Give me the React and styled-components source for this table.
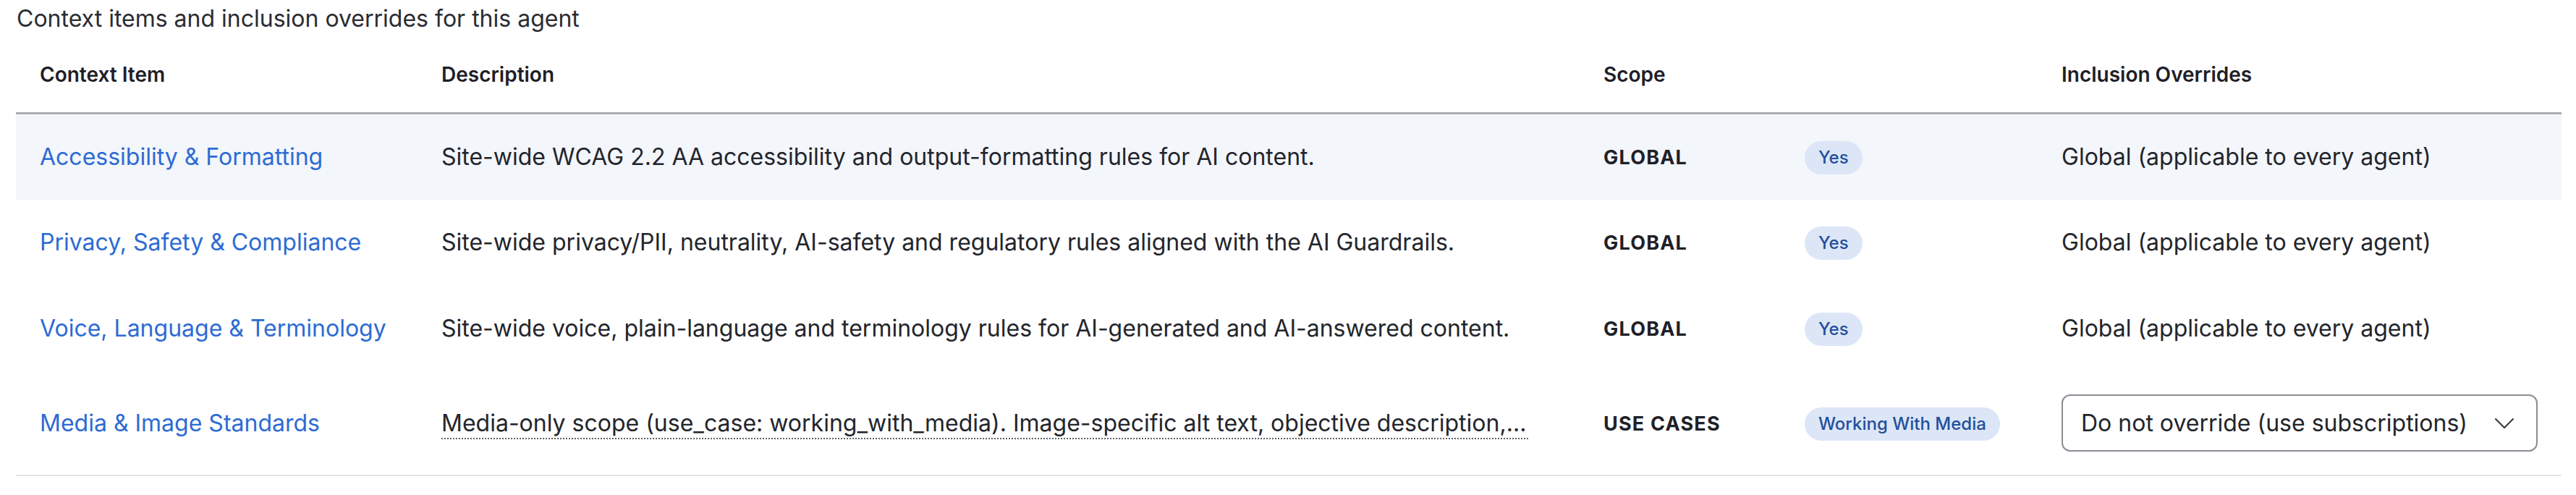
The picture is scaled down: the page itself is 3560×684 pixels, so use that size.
import React from 'react';
import styled, { createGlobalStyle } from 'styled-components';

const GlobalStyle = createGlobalStyle`
  html, body {
    margin: 0;
    padding: 0;
    background: #ffffff;
  }
  body {
    font-family: Inter, "Noto Sans", "Liberation Sans", sans-serif;
    color: #23252b;
  }
`;

const rows = [
  {
    name: 'Accessibility & Formatting',
    description:
      'Site-wide WCAG 2.2 AA accessibility and output-formatting rules for AI content.',
    scope: 'GLOBAL',
    badge: 'Yes',
    override: 'Global (applicable to every agent)',
    highlighted: true
  },
  {
    name: 'Privacy, Safety & Compliance',
    description:
      'Site-wide privacy/PII, neutrality, AI-safety and regulatory rules aligned with the AI Guardrails.',
    scope: 'GLOBAL',
    badge: 'Yes',
    override: 'Global (applicable to every agent)'
  },
  {
    name: 'Voice, Language & Terminology',
    description:
      'Site-wide voice, plain-language and terminology rules for AI-generated and AI-answered content.',
    scope: 'GLOBAL',
    badge: 'Yes',
    override: 'Global (applicable to every agent)'
  },
  {
    name: 'Media & Image Standards',
    description:
      'Media-only scope (use_case: working_with_media). Image-specific alt text, objective description, and caption rules for media content.',
    truncated: true,
    scope: 'USE CASES',
    badge: 'Working With Media',
    select: 'Do not override (use subscriptions)',
    tall: true
  }
];

const Page = styled.section`
  padding: 4px 20px 0 22px;
`;

const Caption = styled.p`
  margin: 0 0 3px 1px;
  font-size: 32px;
  line-height: 44px;
  color: #2a2c32;
`;

const Table = styled.table`
  width: 3518px;
  table-layout: fixed;
  border-collapse: collapse;
  font-size: 32px;
  line-height: 44px;
`;

const HeadCell = styled.th`
  height: 104px;
  padding: 0 33px;
  text-align: left;
  vertical-align: middle;
  font-size: 28px;
  font-weight: 600;
  color: #1e2027;
  border-bottom: 3px solid #abadb1;
`;

const Row = styled.tr`
  height: ${(p) => (p.$tall ? '143px' : '119px')};
  background: ${(p) => (p.$highlighted ? '#f3f6fb' : '#ffffff')};
  border-bottom: ${(p) => (p.$last ? '2px solid #e4e4e6' : 'none')};
`;

const Cell = styled.td`
  padding: 0 33px;
  vertical-align: middle;
  white-space: nowrap;
  overflow: hidden;
`;

const ItemLink = styled.a`
  color: #2d6bd3;
  text-decoration: none;
`;

const Desc = styled.span`
  color: #23252b;
`;

const TruncatedDesc = styled.span`
  display: inline-block;
  max-width: 1502px;
  overflow: hidden;
  white-space: nowrap;
  text-overflow: ellipsis;
  vertical-align: middle;
  line-height: 40px;
  border-bottom: 2px dotted #5d6068;
`;

const Scope = styled.span`
  font-size: 27px;
  font-weight: 700;
  letter-spacing: 1.2px;
  color: #1f2128;
`;

const Badge = styled.span`
  display: inline-flex;
  align-items: center;
  height: 46px;
  padding: 0 19px;
  border-radius: 23px;
  background: #dce6f7;
  color: #234f9c;
  font-size: 24px;
  font-weight: 500;
`;

const Select = styled.div`
  display: flex;
  align-items: center;
  justify-content: space-between;
  box-sizing: border-box;
  width: 658px;
  height: 79px;
  padding: 0 30px 0 25px;
  border: 2px solid #8b8d94;
  border-radius: 12px;
  background: #ffffff;
  color: #23252b;
`;

const Chevron = () => (
  <svg width="28" height="18" viewBox="0 0 28 18" fill="none">
    <path
      d="M2 3l12 12L26 3"
      stroke="#3b3e46"
      strokeWidth="2.2"
      strokeLinecap="round"
      strokeLinejoin="round"
    />
  </svg>
);

const App = () => (
  <React.Fragment>
    <GlobalStyle />
    <Page>
      <Caption>Context items and inclusion overrides for this agent</Caption>
      <Table>
        <colgroup>
          <col style={{ width: 555 }} />
          <col style={{ width: 1606 }} />
          <col style={{ width: 278 }} />
          <col style={{ width: 355 }} />
          <col style={{ width: 724 }} />
        </colgroup>
        <thead>
          <tr>
            <HeadCell>Context Item</HeadCell>
            <HeadCell>Description</HeadCell>
            <HeadCell>Scope</HeadCell>
            <HeadCell />
            <HeadCell>Inclusion Overrides</HeadCell>
          </tr>
        </thead>
        <tbody>
          {rows.map((row, i) => (
            <Row
              key={row.name}
              $highlighted={row.highlighted}
              $tall={row.tall}
              $last={i === rows.length - 1}
            >
              <Cell>
                <ItemLink href="#">{row.name}</ItemLink>
              </Cell>
              <Cell>
                {row.truncated ? (
                  <TruncatedDesc title={row.description}>
                    {row.description}
                  </TruncatedDesc>
                ) : (
                  <Desc>{row.description}</Desc>
                )}
              </Cell>
              <Cell>
                <Scope>{row.scope}</Scope>
              </Cell>
              <Cell>
                <Badge>{row.badge}</Badge>
              </Cell>
              <Cell>
                {row.select ? (
                  <Select>
                    <span>{row.select}</span>
                    <Chevron />
                  </Select>
                ) : (
                  row.override
                )}
              </Cell>
            </Row>
          ))}
        </tbody>
      </Table>
    </Page>
  </React.Fragment>
);

export default App;
